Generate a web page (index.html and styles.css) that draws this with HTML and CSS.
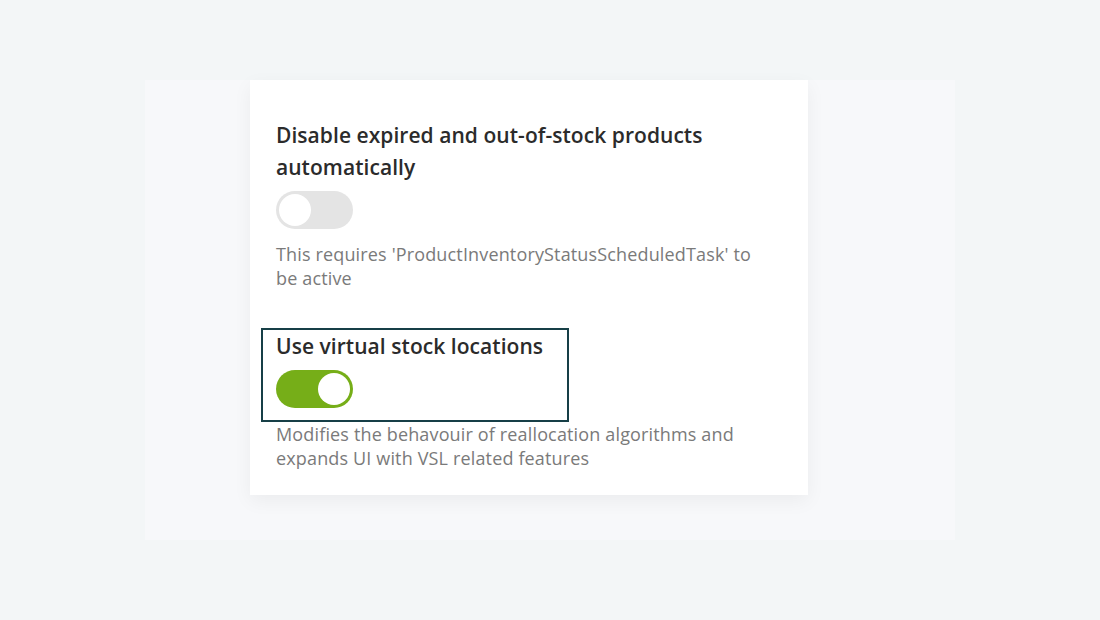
FILE: index.html
```html
<!DOCTYPE html>
<html lang="en">
<head>
<meta charset="utf-8">
<title>Settings</title>
<link rel="stylesheet" href="styles.css">
</head>
<body>
<div class="page">
  <div class="panel">
    <div class="card">
      <div class="item">
        <div class="label">
          <div class="title">Disable expired and out-of-stock products automatically</div>
          <div class="toggle"><span class="knob"></span></div>
        </div>
        <div class="desc">This requires 'ProductInventoryStatusScheduledTask' to be active</div>
      </div>
      <div class="item">
        <div class="label focused">
          <div class="title">Use virtual stock locations</div>
          <div class="toggle on"><span class="knob"></span></div>
        </div>
        <div class="desc">Modifies the behavouir of reallocation algorithms and expands UI with VSL related features</div>
      </div>
    </div>
  </div>
</div>
</body>
</html>
```
FILE: styles.css
```css
html, body {
  margin: 0;
  padding: 0;
  background: #f3f6f7;
  font-family: "Open Sans", "Noto Sans", sans-serif;
}
.page {
  padding: 80px 145px;
}
.panel {
  height: 460px;
  background: #f7f8fa;
  padding-left: 105px;
}
.card {
  width: 558px;
  box-sizing: border-box;
  background: #ffffff;
  padding: 0 26px 25px 26px;
  box-shadow: 0 6px 18px rgba(0, 0, 0, 0.05);
}
.item {
  padding-top: 37px;
}
.item + .item {
  padding-top: 38px;
}
.label {
  border: 2px solid transparent;
  margin-left: -15px;
  padding: 0 13px 11px 13px;
  width: 308px;
  box-sizing: border-box;
}
.item:first-child .label {
  width: auto;
  margin-right: -15px;
}
.label.focused {
  border-color: #173f47;
  padding-bottom: 12px;
}
.title {
  font-size: 21px;
  line-height: 32px;
  font-weight: 600;
  letter-spacing: 0.05px;
  color: #2b2b2b;
  max-width: 506px;
}
.toggle {
  margin-top: 8px;
  width: 77px;
  height: 38px;
  border-radius: 19px;
  background: #e4e4e4;
  position: relative;
}
.toggle .knob {
  position: absolute;
  top: 3px;
  left: 3px;
  width: 32px;
  height: 32px;
  border-radius: 50%;
  background: #ffffff;
}
.toggle.on {
  background: #76ae18;
}
.toggle.on .knob {
  left: 42px;
}
.desc {
  font-size: 18px;
  line-height: 24px;
  letter-spacing: 0.15px;
  color: #7a7a7a;
  max-width: 500px;
}
```
